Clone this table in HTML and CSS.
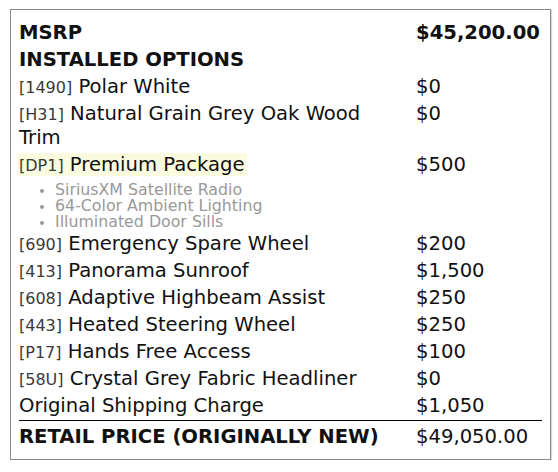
FILE: index.html
```html
<!DOCTYPE html>
<html>
<head>
<meta charset="utf-8">
<link rel="stylesheet" href="styles.css">
</head>
<body>
<div class="sticker">
  <table class="price-table">
    <colgroup><col class="col-item"><col class="col-price"></colgroup>
    <tr class="head"><td>MSRP</td><td>$45,200.00</td></tr>
    <tr class="head"><td colspan="2">INSTALLED OPTIONS</td></tr>
    <tr><td><span class="code">[1490]</span> Polar White</td><td>$0</td></tr>
    <tr><td><span class="code">[H31]</span> Natural Grain Grey Oak Wood Trim</td><td>$0</td></tr>
    <tr class="pkg"><td><span class="hl"><span class="code">[DP1]</span> Premium Package</span>
      <ul class="features">
        <li>SiriusXM Satellite Radio</li>
        <li>64-Color Ambient Lighting</li>
        <li>Illuminated Door Sills</li>
      </ul></td><td>$500</td></tr>
    <tr><td><span class="code">[690]</span> Emergency Spare Wheel</td><td>$200</td></tr>
    <tr><td><span class="code">[413]</span> Panorama Sunroof</td><td>$1,500</td></tr>
    <tr><td><span class="code">[608]</span> Adaptive Highbeam Assist</td><td>$250</td></tr>
    <tr><td><span class="code">[443]</span> Heated Steering Wheel</td><td>$250</td></tr>
    <tr><td><span class="code">[P17]</span> Hands Free Access</td><td>$100</td></tr>
    <tr><td><span class="code">[58U]</span> Crystal Grey Fabric Headliner</td><td>$0</td></tr>
    <tr><td>Original Shipping Charge</td><td>$1,050</td></tr>
    <tr class="total"><td>RETAIL PRICE (ORIGINALLY NEW)</td><td>$49,050.00</td></tr>
  </table>
</div>
</body>
</html>
```
FILE: styles.css
```css
html, body {
  margin: 0;
  padding: 0;
  background: #ffffff;
}
body {
  padding: 9px 0 0 10px;
  font-family: "DejaVu Sans", sans-serif;
  color: #111;
}
.sticker {
  box-sizing: border-box;
  width: 541px;
  height: 451px;
  border: 1px solid #8a8a8a;
  padding: 10px 8px 8px 8px;
  box-shadow: 1px 1px 1px rgba(0,0,0,0.15);
}
.price-table {
  width: 100%;
  border-collapse: collapse;
  table-layout: fixed;
  font-size: 19.6px;
  line-height: 24px;
}
.col-price { width: 126px; }
.price-table td {
  padding: 1px 0 2px 0;
  vertical-align: top;
}
.price-table td:first-child {
  padding-right: 18px;
}
.head td {
  font-weight: bold;
}
.code {
  font-size: 16px;
  line-height: 16px;
  color: #3a3a3a;
}
.hl {
  background: #fbfbdf;
  padding: 0 2px;
  margin-left: -2px;
}
.features {
  margin: 5px 0 -1px 0;
  padding: 0 0 0 36px;
  font-size: 15.8px;
  line-height: 16px;
  color: #999;
}
.features li::marker {
  font-size: 13px;
}
.total td {
  border-top: 1px solid #000;
  font-weight: bold;
  padding-top: 4px;
}
.total td + td {
  font-weight: normal;
}
```
